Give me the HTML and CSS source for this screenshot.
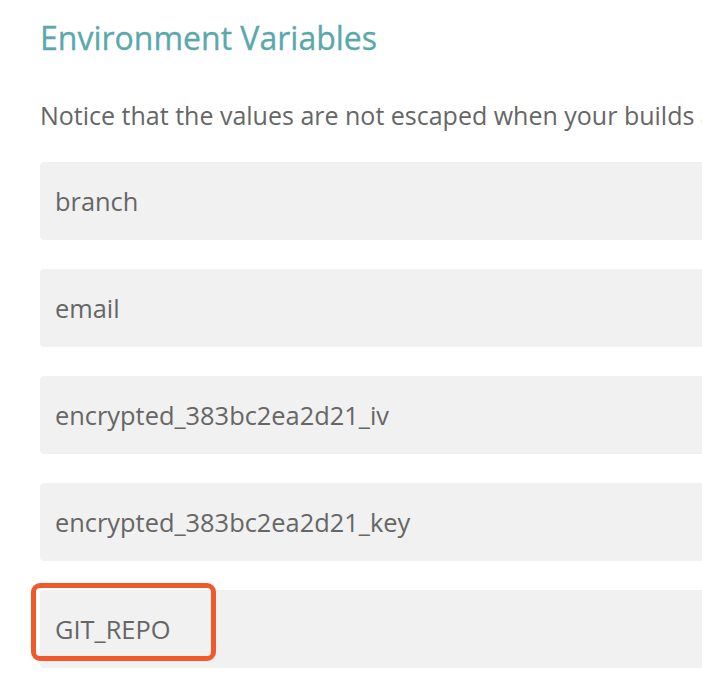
FILE: index.html
```html
<!DOCTYPE html>
<html>
<head>
<meta charset="utf-8">
<link rel="stylesheet" href="styles.css">
</head>
<body>
<div class="page">
  <h2 class="title">Environment Variables</h2>
  <p class="notice">Notice that the values are not escaped when your builds are executed. Special characters (for bash) should be escaped accordingly.</p>
  <div class="vars">
    <div class="var"><span class="name">branch</span></div>
    <div class="var"><span class="name">email</span></div>
    <div class="var"><span class="name">encrypted_383bc2ea2d21_iv</span></div>
    <div class="var"><span class="name">encrypted_383bc2ea2d21_key</span></div>
    <div class="var highlighted"><span class="name">GIT_REPO</span><span class="mark"></span></div>
  </div>
</div>
</body>
</html>
```
FILE: styles.css
```css
html, body {
  margin: 0;
  padding: 0;
  background: #ffffff;
  overflow: hidden;
}
.page {
  width: 1100px;
  padding-left: 40px;
  font-family: "Open Sans", "Noto Sans", sans-serif;
  color: #666666;
}
.title {
  margin: 0;
  padding-top: 18px;
  font-size: 32px;
  line-height: 40px;
  font-weight: 400;
  color: #5aa8ad;
  -webkit-text-stroke: 0.3px #5aa8ad;
}
.notice {
  margin: 41px 0 0 0;
  font-size: 25px;
  line-height: 32px;
  white-space: nowrap;
}
.vars {
  margin-top: 31px;
  display: flex;
  flex-direction: column;
  gap: 29px;
}
.var {
  position: relative;
  height: 78px;
  display: flex;
  align-items: center;
  padding-left: 15px;
  background: #f1f1f1;
  border-radius: 4px;
  font-size: 25.4px;
  color: #666666;
}
.mark {
  position: absolute;
  left: -9px;
  top: -7px;
  width: 185px;
  height: 78px;
  box-sizing: border-box;
  border: 5px solid #f1592a;
  border-radius: 9px;
}
```
